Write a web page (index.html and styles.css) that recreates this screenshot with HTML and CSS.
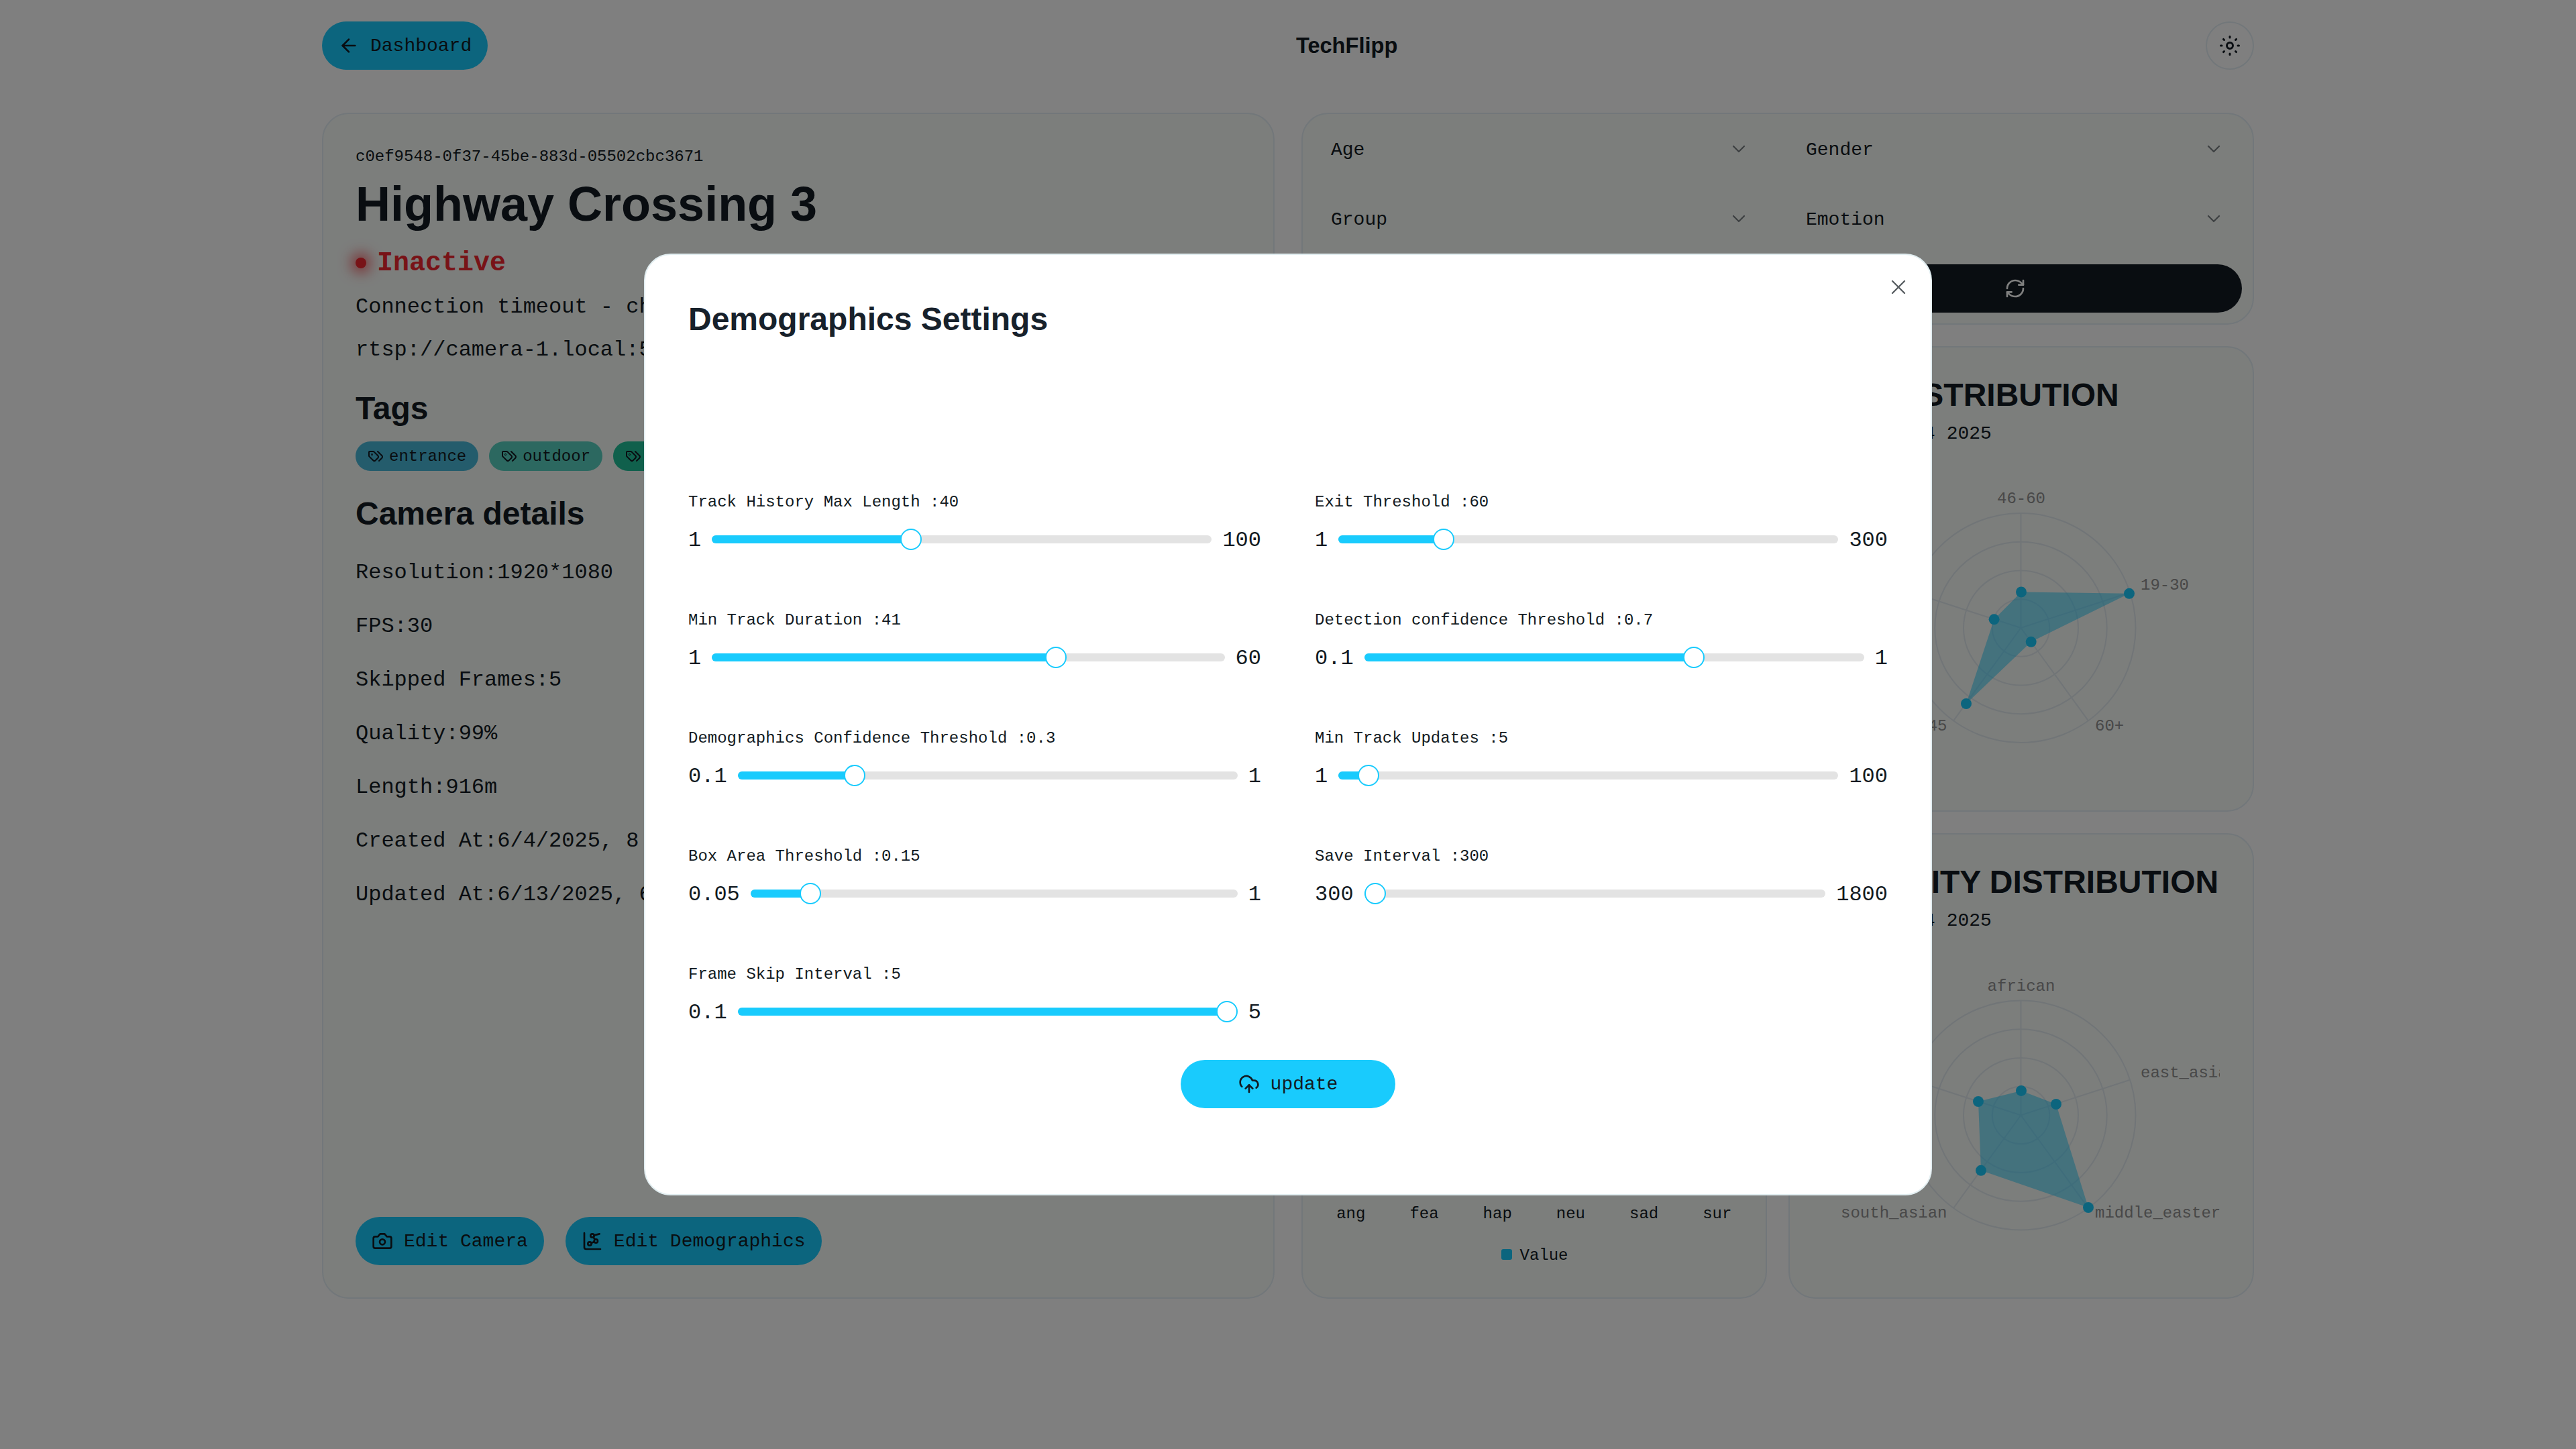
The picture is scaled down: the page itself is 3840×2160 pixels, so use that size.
FILE: index.html
```html
<!DOCTYPE html>
<html lang="en">
<head>
<meta charset="utf-8">
<title>TechFlipp</title>
<link rel="stylesheet" href="styles.css">
</head>
<body>
<div class="page">
  <header class="topbar">
    <a class="btn btn-primary"><svg class="ic" viewBox="0 0 24 24"><path d="m12 19-7-7 7-7"/><path d="M19 12H5"/></svg>Dashboard</a>
    <div class="brand">TechFlipp</div>
    <button class="theme"><svg class="ic ic-sun" viewBox="0 0 24 24"><circle cx="12" cy="12" r="3"/><path d="M12 3v1"/><path d="M12 20v1"/><path d="M3 12h1"/><path d="M20 12h1"/><path d="m18.364 5.636-.707.707"/><path d="m6.343 17.657-.707.707"/><path d="m5.636 5.636.707.707"/><path d="m17.657 17.657.707.707"/></svg></button>
  </header>

  <main class="layout">
    <section class="card info">
      <div class="uuid">c0ef9548-0f37-45be-883d-05502cbc3671</div>
      <h1 class="name">Highway Crossing 3</h1>
      <div class="status"><span class="dot"></span>Inactive</div>
      <p class="msg first">Connection timeout - che</p>
      <p class="msg">rtsp://camera-1.local:554</p>
      <h2 class="sub tags-head">Tags</h2>
      <div class="tags">
        <span class="tag tag-a"><svg class="ic ic-tag" viewBox="0 0 24 24"><path d="m15 5 6.3 6.3a2.4 2.4 0 0 1 0 3.4L17 19"/><path d="M9.586 5.586A2 2 0 0 0 8.172 5H3a1 1 0 0 0-1 1v5.172a2 2 0 0 0 .586 1.414L8.29 18.29a2.426 2.426 0 0 0 3.42 0l3.58-3.58a2.426 2.426 0 0 0 0-3.42z"/><circle cx="6.5" cy="9.5" r=".5"/></svg>entrance</span>
        <span class="tag tag-b"><svg class="ic ic-tag" viewBox="0 0 24 24"><path d="m15 5 6.3 6.3a2.4 2.4 0 0 1 0 3.4L17 19"/><path d="M9.586 5.586A2 2 0 0 0 8.172 5H3a1 1 0 0 0-1 1v5.172a2 2 0 0 0 .586 1.414L8.29 18.29a2.426 2.426 0 0 0 3.42 0l3.58-3.58a2.426 2.426 0 0 0 0-3.42z"/><circle cx="6.5" cy="9.5" r=".5"/></svg>outdoor</span>
        <span class="tag tag-c"><svg class="ic ic-tag" viewBox="0 0 24 24"><path d="m15 5 6.3 6.3a2.4 2.4 0 0 1 0 3.4L17 19"/><path d="M9.586 5.586A2 2 0 0 0 8.172 5H3a1 1 0 0 0-1 1v5.172a2 2 0 0 0 .586 1.414L8.29 18.29a2.426 2.426 0 0 0 3.42 0l3.58-3.58a2.426 2.426 0 0 0 0-3.42z"/><circle cx="6.5" cy="9.5" r=".5"/></svg>traffic</span>
      </div>
      <h2 class="sub details-head">Camera details</h2>
      <ul class="details">
        <li>Resolution:1920*1080</li>
        <li>FPS:30</li>
        <li>Skipped Frames:5</li>
        <li>Quality:99%</li>
        <li>Length:916m</li>
        <li>Created At:6/4/2025, 8</li>
        <li>Updated At:6/13/2025, 6</li>
      </ul>
      <div class="actions">
        <a class="btn btn-primary"><svg class="ic" viewBox="0 0 24 24"><path d="M14.5 4h-5L7 7H4a2 2 0 0 0-2 2v9a2 2 0 0 0 2 2h16a2 2 0 0 0 2-2V9a2 2 0 0 0-2-2h-3l-2.5-3z"/><circle cx="12" cy="13" r="3"/></svg>Edit Camera</a>
        <a class="btn btn-primary"><svg class="ic" viewBox="0 0 24 24"><path d="m13.11 7.664 1.78 2.672"/><path d="m14.162 12.788-3.324 1.424"/><path d="m20 4-6.06 1.515"/><path d="M3 3v16a2 2 0 0 0 2 2h16"/><circle cx="12" cy="6" r="2"/><circle cx="16" cy="12" r="2"/><circle cx="9" cy="15" r="2"/></svg>Edit Demographics</a>
      </div>
    </section>

    <div class="side">
      <section class="card filters">
        <div class="select"><span>Age</span><svg class="ic chev" viewBox="0 0 24 24"><path d="m6 9 6 6 6-6"/></svg></div>
        <div class="select"><span>Gender</span><svg class="ic chev" viewBox="0 0 24 24"><path d="m6 9 6 6 6-6"/></svg></div>
        <div class="select"><span>Group</span><svg class="ic chev" viewBox="0 0 24 24"><path d="m6 9 6 6 6-6"/></svg></div>
        <div class="select"><span>Emotion</span><svg class="ic chev" viewBox="0 0 24 24"><path d="m6 9 6 6 6-6"/></svg></div>
        <div class="select"></div>
        <button class="refresh"><svg class="ic" viewBox="0 0 24 24"><path d="M3 12a9 9 0 0 1 9-9 9.75 9.75 0 0 1 6.74 2.74L21 8"/><path d="M21 3v5h-5"/><path d="M21 12a9 9 0 0 1-9 9 9.75 9.75 0 0 1-6.74-2.74L3 16"/><path d="M8 16H3v5"/></svg></button>
      </section>

      <div class="charts">
        <section class="card chart"></section>

        <section class="card chart">
          <h3 class="chart-title">AGE DISTRIBUTION</h3>
          <div class="chart-date">Wed, Jun 04 2025</div>
          <svg class="radar" viewBox="0 0 593 520">
            <g class="grid">
              <circle cx="296.5" cy="260" r="42.75"/><circle cx="296.5" cy="260" r="85.5"/><circle cx="296.5" cy="260" r="128.25"/><circle cx="296.5" cy="260" r="171"/>
              <path d="M296.5 260V89M296.5 260L459.1 207.2M296.5 260L397 398.3M296.5 260L196 398.3M296.5 260L133.9 207.2"/>
            </g>
            <polygon class="area" points="297,206.5 458,208.8 311.7,280.8 215,373 256.6,247.3"/>
            <g class="pts"><circle cx="297" cy="206.5" r="8"/><circle cx="458" cy="208.8" r="8"/><circle cx="311.7" cy="280.8" r="8"/><circle cx="215" cy="373" r="8"/><circle cx="256.6" cy="247.3" r="8"/></g>
            <text class="lbl" x="297" y="74" text-anchor="middle">46-60</text>
            <text class="lbl" x="475" y="203">19-30</text>
            <text class="lbl" x="407" y="413">60+</text>
            <text class="lbl" x="186.5" y="413" text-anchor="end">31-45</text>
          </svg>
        </section>

        <section class="card chart">
          <svg class="bars" viewBox="0 0 658 520">
            <g class="pts"><rect x="26" y="300" width="60" height="70"/><rect x="135" y="320" width="60" height="50"/><rect x="244" y="180" width="60" height="190"/><rect x="353" y="90" width="60" height="280"/><rect x="462" y="240" width="60" height="130"/><rect x="571" y="300" width="60" height="70"/></g>
            <text class="axis" x="55.8" y="414" text-anchor="middle">ang</text>
            <text class="axis" x="165" y="414" text-anchor="middle">fea</text>
            <text class="axis" x="274.2" y="414" text-anchor="middle">hap</text>
            <text class="axis" x="383.4" y="414" text-anchor="middle">neu</text>
            <text class="axis" x="492.6" y="414" text-anchor="middle">sad</text>
            <text class="axis" x="601.8" y="414" text-anchor="middle">sur</text>
            <rect class="key" x="280" y="460" width="16" height="16" rx="3"/>
            <text class="axis" x="307.5" y="476">Value</text>
          </svg>
        </section>

        <section class="card chart">
          <h3 class="chart-title">ETHNICITY DISTRIBUTION</h3>
          <div class="chart-date">Wed, Jun 04 2025</div>
          <svg class="radar" viewBox="0 0 593 520">
            <g class="grid">
              <circle cx="296.5" cy="260.5" r="42.75"/><circle cx="296.5" cy="260.5" r="85.5"/><circle cx="296.5" cy="260.5" r="128.25"/><circle cx="296.5" cy="260.5" r="171"/>
              <path d="M296.5 260.5V89.5M296.5 260.5L459.1 207.7M296.5 260.5L397 398.8M296.5 260.5L196 398.8M296.5 260.5L133.9 207.7"/>
            </g>
            <polygon class="area" points="297,223.9 349,244 397,398 237,342.8 233,240"/>
            <g class="pts"><circle cx="297" cy="223.9" r="8"/><circle cx="349" cy="244" r="8"/><circle cx="397" cy="398" r="8"/><circle cx="237" cy="342.8" r="8"/><circle cx="233" cy="240" r="8"/></g>
            <text class="lbl" x="297" y="75" text-anchor="middle">african</text>
            <text class="lbl" x="475" y="203.5">east_asian</text>
            <text class="lbl" x="407" y="412.5">middle_eastern</text>
            <text class="lbl" x="186.5" y="412.5" text-anchor="end">south_asian</text>
          </svg>
        </section>
      </div>
    </div>
  </main>
</div>

<div class="overlay">
  <div class="modal">
    <button class="close"><svg class="ic ic-x" viewBox="0 0 24 24"><path d="M18 6 6 18"/><path d="m6 6 12 12"/></svg></button>
    <h2 class="modal-title">Demographics Settings</h2>
    <div class="sliders">
      <div class="field"><div class="field-label">Track History Max Length :40</div><div class="range"><span>1</span><div class="track" style="--p:.3939"><div class="fill"></div><div class="thumb"></div></div><span>100</span></div></div>
      <div class="field"><div class="field-label">Exit Threshold :60</div><div class="range"><span>1</span><div class="track" style="--p:.1973"><div class="fill"></div><div class="thumb"></div></div><span>300</span></div></div>
      <div class="field"><div class="field-label">Min Track Duration :41</div><div class="range"><span>1</span><div class="track" style="--p:.678"><div class="fill"></div><div class="thumb"></div></div><span>60</span></div></div>
      <div class="field"><div class="field-label">Detection confidence Threshold :0.7</div><div class="range"><span>0.1</span><div class="track" style="--p:.6667"><div class="fill"></div><div class="thumb"></div></div><span>1</span></div></div>
      <div class="field"><div class="field-label">Demographics Confidence Threshold :0.3</div><div class="range"><span>0.1</span><div class="track" style="--p:.2222"><div class="fill"></div><div class="thumb"></div></div><span>1</span></div></div>
      <div class="field"><div class="field-label">Min Track Updates :5</div><div class="range"><span>1</span><div class="track" style="--p:.0404"><div class="fill"></div><div class="thumb"></div></div><span>100</span></div></div>
      <div class="field"><div class="field-label">Box Area Threshold :0.15</div><div class="range"><span>0.05</span><div class="track" style="--p:.1053"><div class="fill"></div><div class="thumb"></div></div><span>1</span></div></div>
      <div class="field"><div class="field-label">Save Interval :300</div><div class="range"><span>300</span><div class="track" style="--p:0"><div class="fill"></div><div class="thumb"></div></div><span>1800</span></div></div>
      <div class="field"><div class="field-label">Frame Skip Interval :5</div><div class="range"><span>0.1</span><div class="track" style="--p:1"><div class="fill"></div><div class="thumb"></div></div><span>5</span></div></div>
    </div>
    <button class="btn update"><svg class="ic" viewBox="0 0 24 24"><path d="M12 13v8"/><path d="M4 14.899A7 7 0 1 1 15.71 8h1.79a4.5 4.5 0 0 1 2.5 8.242"/><path d="m8 17 4-4 4 4"/></svg>update</button>
  </div>
</div>
</body>
</html>
```
FILE: styles.css
```css
* { box-sizing: border-box; }
html, body { margin: 0; height: 100%; }
body {
  background: #fff;
  color: #121a22;
  font-family: "Liberation Mono", monospace;
  font-size: 32px;
}
h1, h2, h3, p, ul { margin: 0; padding: 0; }
ul { list-style: none; }
button { font: inherit; color: inherit; cursor: pointer; }

.ic { width: 32px; height: 32px; fill: none; stroke: currentColor; stroke-width: 2; stroke-linecap: round; stroke-linejoin: round; flex: none; }
.ic-sun { width: 36px; height: 36px; }
.ic-tag { width: 24px; height: 24px; }
.ic-x { width: 36px; height: 36px; stroke-width: 1.6; }

.page { width: 2880px; margin: 0 auto; padding-top: 32px; }
.topbar { display: flex; justify-content: space-between; align-items: center; height: 72px; }
.brand { font-family: "Liberation Sans", sans-serif; font-weight: 700; font-size: 32.6px; }
.theme { width: 72px; height: 72px; border-radius: 50%; border: 2px solid #e4eef4; background: transparent; display: flex; align-items: center; justify-content: center; padding: 0; }

.btn { display: inline-flex; align-items: center; gap: 16px; height: 72px; padding: 0 24px; border-radius: 36px; font-size: 28px; border: 0; white-space: nowrap; font-family: "Liberation Mono", monospace; }
.btn-primary { background: #19cbfd; color: #121a22; }

.layout { display: grid; grid-template-columns: 1420px 1420px; column-gap: 40px; margin-top: 64px; }
.card { background: #f8fcf9; border: 2px solid #e4eef4; border-radius: 40px; }

.info { padding: 48px; display: flex; flex-direction: column; height: 1768px; }
.uuid { font-size: 24px; line-height: 32px; }
.name { font-family: "Liberation Sans", sans-serif; font-weight: 700; font-size: 72px; line-height: 80px; margin-top: 14px; white-space: nowrap; }
.status { display: flex; align-items: center; gap: 16px; margin-top: 18px; height: 60px; font-size: 40px; font-weight: 700; color: #f0262e; }
.dot { width: 16px; height: 16px; border-radius: 50%; background: #f0262e; box-shadow: 0 0 20px 6px rgba(240, 38, 46, .75); }
.msg { line-height: 48px; margin-top: 16px; white-space: nowrap; }
.msg.first { margin-top: 12px; }
.sub { font-family: "Liberation Sans", sans-serif; font-weight: 700; font-size: 48px; line-height: 64px; }
.tags-head { margin-top: 31px; }
.tags { display: flex; gap: 16px; margin-top: 17px; }
.tag { display: inline-flex; align-items: center; gap: 8px; height: 44px; padding: 0 18px; border-radius: 22px; font-size: 24px; }
.tag-a { background: #49b8d8; }
.tag-b { background: #58d0c0; }
.tag-c { background: #20c098; }
.details-head { margin-top: 32px; }
.details { display: flex; flex-direction: column; gap: 32px; margin-top: 32px; line-height: 48px; }
.details li { white-space: nowrap; }
.actions { display: flex; gap: 32px; margin-top: auto; }

.side { display: flex; flex-direction: column; gap: 32px; }
.filters { display: grid; grid-template-columns: 1fr 1fr; gap: 32px; padding: 16px; }
.select { display: flex; justify-content: space-between; align-items: center; height: 72px; padding: 0 26px; font-size: 28px; }
.select span { padding-top: 3px; }
.chev { opacity: .55; stroke-width: 1.6; }
.refresh { height: 72px; border: 0; border-radius: 36px; background: #121a22; color: #fff; display: flex; align-items: center; justify-content: center; padding: 0; }

.charts { display: grid; grid-template-columns: 1fr 1fr; gap: 32px; }
.chart { height: 694px; padding: 32px; overflow: hidden; }
.chart-title { font-family: "Liberation Sans", sans-serif; font-weight: 700; font-size: 48px; line-height: 72px; margin-top: 3px; white-space: nowrap; }
.chart-date { font-size: 28px; line-height: 42px; margin-top: 1px; }
.radar { display: block; width: 593px; height: 520px; margin: 8px 0 0 16px; }
.bars { display: block; width: 658px; height: 520px; margin: 126px 0 0 -16px; }
.grid circle, .grid path { fill: none; stroke: #e2eaef; stroke-width: 2; }
.area { fill: #19cbfd; fill-opacity: .5; }
.pts { fill: #19cbfd; }
.key { fill: #19cbfd; }
.lbl { font-size: 24px; fill: #909090; font-family: "Liberation Mono", monospace; }
.axis { font-size: 24px; fill: #121a22; font-family: "Liberation Mono", monospace; }

.overlay { position: fixed; inset: 0; background: rgba(0, 0, 0, .5); display: flex; align-items: center; justify-content: center; }
.modal { position: relative; width: 1920px; padding: 64px; background: #fff; border: 2px solid #e2eef1; border-radius: 40px; display: flex; flex-direction: column; }
.close { position: absolute; top: 30px; right: 30px; width: 36px; height: 36px; padding: 0; border: 0; background: transparent; color: #5a5f63; display: flex; }
.modal-title { font-family: "Liberation Sans", sans-serif; font-weight: 700; font-size: 48px; line-height: 64px; color: #17212b; }
.sliders { display: grid; grid-template-columns: 1fr 1fr; column-gap: 80px; row-gap: 78px; margin-top: 222px; }
.field-label { font-size: 24px; line-height: 38px; margin-bottom: 12px; white-space: nowrap; }
.range { display: flex; align-items: center; gap: 16px; height: 48px; font-size: 32px; line-height: 48px; }
.range span { padding-top: 3px; }
.track { position: relative; flex: 1; height: 12px; border-radius: 6px; background: #e3e3e3; }
.fill { height: 100%; border-radius: 6px 0 0 6px; background: #19cbfd; width: calc(var(--p) * (100% - 32px) + 16px); }
.thumb { position: absolute; top: -10px; left: calc(var(--p) * (100% - 32px)); width: 32px; height: 32px; border-radius: 50%; background: #fff; border: 2px solid #19cbfd; }
.update { align-self: center; width: 320px; justify-content: center; background: #19cbfd; color: #121a22; margin-top: 48px; margin-bottom: 64px; }
```
